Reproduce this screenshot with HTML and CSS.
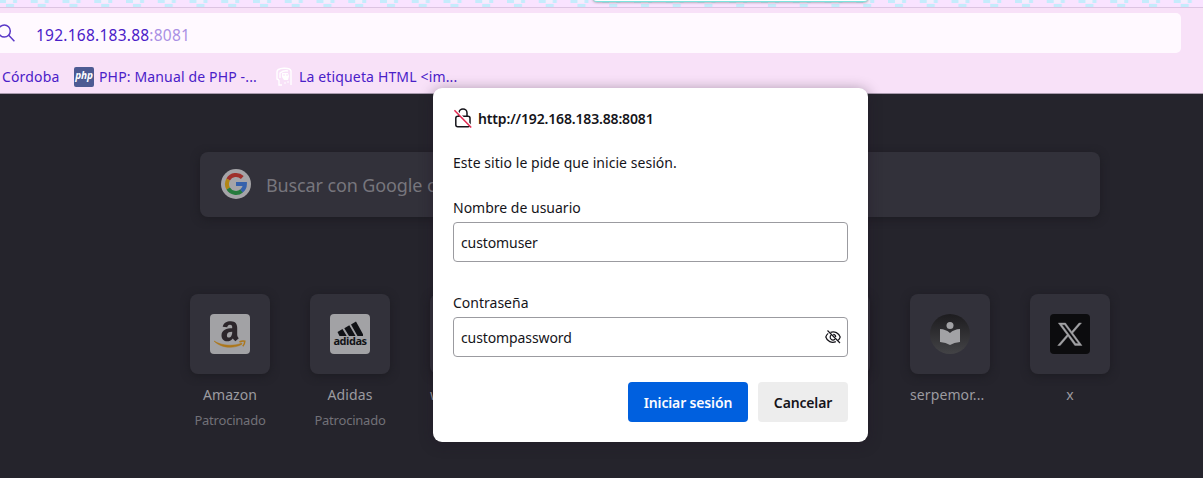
FILE: index.html
```html
<!DOCTYPE html>
<html lang="es">
<head>
<meta charset="utf-8">
<title>Nueva pestaña</title>
<link rel="stylesheet" href="styles.css">
</head>
<body>
<div class="browser">
  <div class="tabstrip">
    <svg class="pattern" width="1203" height="7">
      <defs>
        <pattern id="scales" width="31.75" height="7" patternUnits="userSpaceOnUse" x="-1">
          <rect width="31.75" height="7" fill="#f9e3ff"/>
          <path d="M0 0h7v3H0zM14 0h4v3h-4zM7 4h8v3H7z" fill="#c5ecfc"/>
          <path d="M7 0h7v3H7z" fill="#f4eefd"/>
        </pattern>
      </defs>
      <rect width="1203" height="7" fill="url(#scales)"/>
    </svg>
    <div class="active-tab"></div>
  </div>
  <div class="navbar">
    <div class="urlbar">
      <svg class="search-icon" width="16" height="20" viewBox="0 0 16 20" fill="none" stroke="#5a38c8" stroke-width="1.5"><circle cx="4.3" cy="8" r="6"/><path d="M8.7 12.3 14.4 18.2"/></svg>
      <span class="url">192.168.183.88<span class="port">:8081</span></span>
    </div>
  </div>
  <div class="bookmarks">
    <span class="bookmark b-cordoba">Córdoba</span>
    <span class="php">php</span>
    <span class="bookmark b-php">PHP: Manual de PHP -...</span>
    <svg class="face" width="18" height="20" viewBox="0 0 18 20" fill="none" stroke="#fff" stroke-width="1.4"><path d="M3 13 1 12V5C1 .5 14 0 15 4V18M3 13v5h3M4 11V6q4-3 8-2"/><path d="M6 6h6l1 3-1 4H8L6 10z" fill="#fff" stroke="none"/><path d="M8 7v2M11 7v2" stroke="#f8e1f8" stroke-width="1"/><path d="M9 15v2M12 14v2" stroke-width="1"/></svg>
    <span class="bookmark b-html">La etiqueta HTML &lt;im...</span>
  </div>
  <main class="newtab">
    <div class="searchbox">
      <svg class="google" width="30" height="30" viewBox="0 0 30 30"><circle cx="15" cy="15" r="15" fill="#a5a4a8"/><g fill="none" stroke-width="4"><path d="M21.3 8.5A9 9 0 0 0 7.2 10.5" stroke="#9f302c"/><path d="M7.2 10.5a9 9 0 0 0 0 9" stroke="#b28715"/><path d="M7.2 19.5a9 9 0 0 0 13.5 2.4" stroke="#267b3d"/><path d="M20.5 22a9 9 0 0 0 3.4-7H15" stroke="#3561ac"/></g></svg>
      <span class="placeholder">Buscar con Google o</span>
    </div>
    <div class="tiles">
      <div class="site"><div class="tile"><svg width="40" height="40" viewBox="0 0 40 40"><rect width="40" height="40" rx="4" fill="#a2a2a5"/><path d="M12.7 12.8C13.5 8.2 17.5 7 21 7.2c4.2.2 6.2 2.6 6.2 6.6V21c0 2 1.6 3.2 1.6 3.2l-3.4 3c-1.5-1-2.5-2.7-2.5-2.7-4 4.8-11.4 3.4-11.4-3 0-5.5 5.3-7.2 10.7-7.2.3-2.8-.6-3.5-2.2-3.5-1.8 0-2.4 1-2.8 2.4zM22.2 17.8c-3.4 0-5.3 1-5.3 3.6 0 2.8 3.1 2.9 4.4.5.8-1.4.9-2.4.9-4.1z" fill="#2c262b" fill-rule="evenodd"/><path d="M4 27C12 32 24 32.5 32 29L31.5 30.5C23 35 11 34.2 4 27z" fill="#ad771b" stroke="#ad771b" stroke-width=".5"/><path d="M29.5 28q2.5-1.5 5.3-.8 0 2.5-2 5" fill="none" stroke="#ad771b" stroke-width="1.5"/></svg></div><span class="name">Amazon</span><span class="sponsor">Patrocinado</span></div>
      <div class="site"><div class="tile"><div class="adidas"><svg width="26" height="15" viewBox="0 0 26 15" fill="#111216"><path d="M14 3.5 19 .5 27 15h-6.5zM7.3 7.2 12.3 4.2 18.5 15H12zM.5 11l5-3 4.2 7H2.5z"/></svg><span class="adidas-name">adidas</span></div></div><span class="name">Adidas</span><span class="sponsor">Patrocinado</span></div>
      <div class="site"><div class="tile"></div><span class="name wide">wikipedia</span></div>
      <div class="site"><div class="tile"></div></div>
      <div class="site"><div class="tile"></div></div>
      <div class="site"><div class="tile"></div></div>
      <div class="site"><div class="tile"><svg width="40" height="40" viewBox="0 0 40 40"><defs><linearGradient id="disc" x2="0" y2="1"><stop stop-color="#1d1c1f"/><stop offset="1" stop-color="#434346"/></linearGradient></defs><circle cx="20" cy="20" r="20" fill="url(#disc)"/><g fill="#a2a2a5"><circle cx="20" cy="11.5" r="3.5"/><path d="M10 15q6 .3 10 4 4-3.7 10-4v13q-6 .3-10 3-4-2.7-10-3z"/></g></svg></div><span class="name wide">serpemor...</span></div>
      <div class="site"><div class="tile"><svg width="40" height="40" viewBox="0 0 40 40"><rect width="40" height="40" rx="4" fill="#0c0c0e"/><path d="M8.3 9h7.2l6.2 8.6L29 9h2.5l-8.7 10.1L32 31.5h-7.2l-6.7-9.2-7.9 9.2H7.7L17 20.7zm3.5 1.8 14 18.8h2.7l-13.9-18.8z" fill="#a2a2a5" stroke="#a2a2a5" stroke-width=".4" fill-rule="evenodd"/></svg></div><span class="name">x</span></div>
    </div>
  </main>
</div>
<form class="dialog">
  <div class="origin">
    <svg width="20" height="22" viewBox="0 0 20 22" fill="none" stroke="#15141a" stroke-width="1.5"><path d="M6 9.2V5.9a4 4 0 0 1 8 0v3.3"/><rect x="2.8" y="9.2" width="14.2" height="10.6" rx="2"/><path d="M2.6 3.2 18.5 19.5" stroke="#fff" stroke-width="2"/><path d="M1.4 3.2 18.2 20.5" stroke="#e22850" stroke-width="1.5"/></svg>
    <span class="host">http://192.168.183.88:8081</span>
  </div>
  <div class="message"><span class="t-message">Este sitio le pide que inicie sesión.</span></div>
  <div class="label"><span class="t-user">Nombre de usuario</span></div>
  <div class="field"><span class="v-user">customuser</span></div>
  <div class="label second"><span class="t-pass">Contraseña</span></div>
  <div class="field"><span class="v-pass">custompassword</span>
    <svg class="eye" width="16" height="16" viewBox="0 0 16 16" fill="none" stroke="#15141a" stroke-width="1.2"><path d="M5.5 3.4C9.5 1.8 14 4 15.2 8q-.6 2-2.1 3.4M3.2 4.4Q1.4 5.8.8 8c1.2 4.3 6 6.5 10 4.6"/><path d="M6 6.2a2.8 2.8 0 0 0 4 4M8.2 5.4A2.7 2.7 0 0 1 10.7 8M2.5 1.5 15 14"/></svg>
  </div>
  <div class="actions">
    <button type="button" class="primary"><span class="t-login">Iniciar sesión</span></button>
    <button type="button" class="secondary"><span class="t-cancel">Cancelar</span></button>
  </div>
</form>
</body>
</html>
```
FILE: styles.css
```css
* { box-sizing: border-box; }
body { margin: 0; width: 1203px; height: 478px; overflow: hidden; position: relative; font-family: "Noto Sans", "Open Sans", sans-serif; font-size: 14px; color: #15141a; }
span { white-space: nowrap; }
svg { display: block; flex: none; }
.browser { height: 478px; display: flex; flex-direction: column; background: #25242c; }
.tabstrip { height: 8px; border-bottom: 1px solid #dcc4e2; position: relative; flex: none; overflow: hidden; background: #f9e3ff; }
.active-tab { position: absolute; left: 593px; top: -10px; width: 275px; height: 12px; background: #fff; border-radius: 4px; border-bottom: 1px solid #7ce4df; box-shadow: 0 0 3px #777; }
.navbar { height: 52px; padding-top: 5px; background: #f8e1f8; flex: none; }
.urlbar { width: 1181px; height: 40px; display: flex; align-items: center; background: #fff9ff; border-radius: 0 5px 5px 0; }
.url { margin-left: 20px; padding-top: 3px; font-size: 15.5px; letter-spacing: .24px; color: #4a20c8; }
.port { color: #aa90e4; }
.bookmarks { height: 34px; display: flex; align-items: center; background: #f8e1f8; border-bottom: 1px solid #a99aae; color: #4a20c8; flex: none; padding-left: 2px; letter-spacing: .15px; }
.php { width: 20px; height: 20px; margin-left: 15px; border-radius: 2px; background: #4d5b93; color: #fff; font: italic bold 10px/17px "Open Sans", sans-serif; text-align: center; letter-spacing: -.1px; }
.b-cordoba { width: 57px; }
.b-php { margin-left: 5px; width: 158px; }
.face { margin-left: 19px; }
.b-html { margin-left: 5px; }
.newtab { flex: 1; padding-top: 58px; }
.searchbox { width: 900px; height: 65px; margin-left: 200px; padding-left: 21px; display: flex; align-items: center; background: #32313a; border-radius: 8px; box-shadow: 0 2px 8px #1d1c22; }
.google { margin-bottom: 1px; }
.placeholder { margin-left: 15px; font-size: 18px; letter-spacing: -.12px; color: #77767d; }
.tiles { margin: 77px 0 0 190px; display: flex; gap: 40px; }
.site { width: 80px; display: flex; flex-direction: column; align-items: center; }
.tile { width: 80px; height: 80px; display: flex; align-items: center; justify-content: center; background: #32313a; border-radius: 8px; box-shadow: 0 2px 8px #1d1c22; }
.name { margin-top: 11px; line-height: 20px; font-size: 14px; letter-spacing: .1px; color: #9c9ba0; }
.wide { width: 80px; }
.sponsor { margin-top: 6px; line-height: 18px; font-size: 13px; letter-spacing: -.22px; color: #727178; }
.adidas { width: 40px; height: 40px; padding-top: 7px; border-radius: 4px; background: #a2a2a5; display: flex; flex-direction: column; align-items: center; }
.adidas-name { font: bold 11px/9px "Open Sans", sans-serif; letter-spacing: -.5px; color: #111216; }
.dialog { position: absolute; left: 433px; top: 88px; width: 435px; height: 354px; padding: 19px 20px 20px; background: #fff; border-radius: 9px; box-shadow: 0 2px 14px rgba(30,20,35,.42); }
.origin { height: 22px; display: flex; align-items: center; gap: 5px; font-weight: 600; letter-spacing: -.16px; }
.message { margin-top: 24px; height: 20px; line-height: 20px; letter-spacing: .05px; }
.label { margin-top: 25px; height: 20px; line-height: 20px; }
.label.second { margin-top: 31px; }
.field { height: 40px; margin-top: 4px; padding: 0 7px; display: flex; align-items: center; border: 1px solid #9b9ba0; border-radius: 4px; letter-spacing: -.1px; }
.eye { margin-left: auto; margin-right: -1px; }
.actions { margin-top: 25px; display: flex; justify-content: flex-end; gap: 10px; }
button { height: 40px; padding: 0; border: 0; border-radius: 4px; font: 600 14px "Noto Sans", sans-serif; letter-spacing: -.15px; }
.primary { width: 120px; background: #0060df; color: #fbfbfe; }
.secondary { width: 90px; background: #ededed; color: #15141a; }
```
